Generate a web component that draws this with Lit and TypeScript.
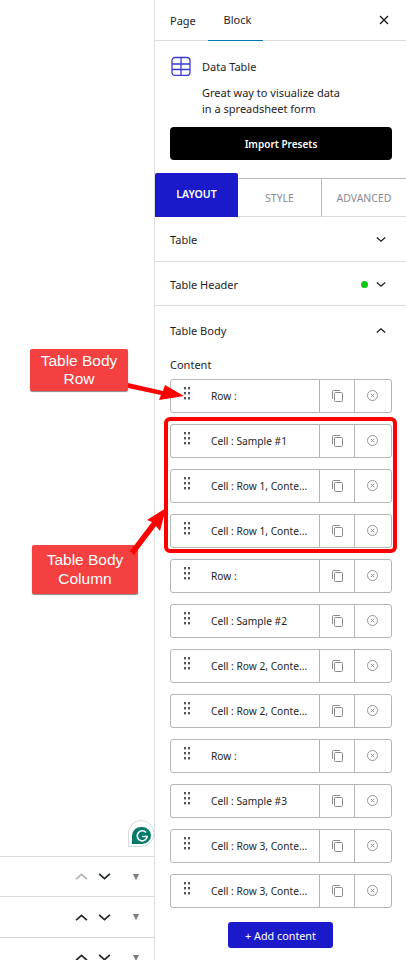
import { LitElement, html, css, svg } from "lit";
import { customElement } from "lit/decorators.js";

const chevron = (up = false) => html`
  <svg class="chev" viewBox="0 0 12 8">
    <path d=${up ? "M1 6.5 6 2l5 4.5" : "M1 1.5 6 6l5-4.5"} fill="none" stroke="currentColor" stroke-width="1.6" />
  </svg>
`;

const rows = [
  "Row :",
  "Cell : Sample #1",
  "Cell : Row 1, Conte...",
  "Cell : Row 1, Conte...",
  "Row :",
  "Cell : Sample #2",
  "Cell : Row 2, Conte...",
  "Cell : Row 2, Conte...",
  "Row :",
  "Cell : Sample #3",
  "Cell : Row 3, Conte...",
  "Cell : Row 3, Conte...",
];

@customElement("app-root")
export class AppRoot extends LitElement {
  static override styles = css`
    :host {
      display: block;
      position: relative;
      width: 406px;
      height: 960px;
      overflow: hidden;
      background: #fff;
      font-family: "Noto Sans", "Open Sans", sans-serif;
      font-size: 11px;
      color: #1e1e1e;
    }

    .page {
      display: flex;
      height: 960px;
    }

    /* left side, editor canvas */
    .canvas {
      width: 154px;
      height: 960px;
      flex: none;
      border-right: 1px solid #ddd;
      overflow: hidden;
      padding-top: 820px;
      box-sizing: content-box;
    }

    .grammarly {
      width: 26px;
      height: 27px;
      margin: 0 0 9px 128px;
      display: block;
    }

    .move-row {
      height: 40px;
      box-sizing: border-box;
      border-top: 1px solid #d8d8dc;
      display: flex;
      align-items: center;
      gap: 10px;
      padding-left: 75px;
      color: #23282d;
    }

    .move-row.tall {
      height: 41px;
    }

    .move-row .off {
      display: flex;
      color: #b4b4b4;
    }

    .move-row .chev {
      width: 13px;
      height: 9px;
    }

    .caret {
      width: 0;
      height: 0;
      margin-left: 12px;
      border: 3.5px solid transparent;
      border-top: 6px solid #7b7b80;
      border-bottom: 0;
    }

    /* right side, inspector */
    .sidebar {
      width: 251px;
      flex: none;
    }

    .top-tabs {
      height: 41px;
      box-sizing: border-box;
      display: flex;
      align-items: center;
      border-bottom: 1px solid #ddd;
      padding: 0 15px;
      position: relative;
    }

    .top-tabs span {
      width: 54px;
    }

    .top-tabs .active {
      position: absolute;
      left: 53px;
      top: 0;
      width: 55px;
      height: 41px;
      padding-left: 4px;
      line-height: 40px;
      text-align: center;
      border-bottom: 1px solid #007cba;
      box-sizing: border-box;
    }

    .close {
      margin-left: auto;
      margin-right: 2px;
    }

    .block-info {
      display: grid;
      grid-template-columns: 31px 1fr;
      padding: 15px 15px 0 16px;
      height: 70px;
      box-sizing: border-box;
      line-height: 16px;
    }

    .block-info svg {
      display: block;
    }

    .block-name {
      padding-top: 3px;
      height: 19px;
    }

    .block-desc {
      grid-column: 2;
      margin-top: 7px;
    }

    .presets {
      display: block;
      width: 222px;
      height: 33px;
      margin: 16px 0 0 15px;
      border: none;
      border-radius: 4px;
      background: #000;
      color: #fff;
      font: 600 10px "Noto Sans", sans-serif;
    }

    .tabs {
      display: grid;
      grid-template-columns: 83px 84px 84px;
      align-items: end;
      height: 44px;
      margin-top: 13px;
    }

    .tabs div {
      height: 39px;
      display: flex;
      align-items: center;
      justify-content: center;
      box-sizing: border-box;
      border-top: 1px solid #bbb;
      border-right: 1px solid #bbb;
      border-bottom: 1px solid #ddd;
      color: #8a8a94;
      font-size: 10.5px;
    }

    .tabs div:last-child {
      border-right: none;
    }

    .tabs .on {
      height: 44px;
      padding-bottom: 2px;
      background: #1a1acb;
      color: #fff;
      font-weight: 600;
      border: none;
      border-radius: 2px 2px 0 0;
    }

    .section {
      display: flex;
      align-items: center;
      justify-content: space-between;
      height: 44px;
      box-sizing: border-box;
      padding: 1px 20px 0 15px;
      border-bottom: 1px solid #ddd;
    }

    .section.first {
      height: 45px;
      padding-top: 0;
    }

    .section .right {
      display: flex;
      align-items: center;
      gap: 8px;
    }

    .section .chev {
      width: 10px;
      height: 7px;
    }

    .dot {
      width: 7px;
      height: 7px;
      border-radius: 50%;
      background: #0fc60f;
    }

    .section.open {
      border-bottom: none;
      height: 48px;
      padding-top: 0;
    }

    .label {
      padding-left: 15px;
      height: 25px;
      line-height: 22px;
    }

    .list {
      display: flex;
      flex-direction: column;
      gap: 11px;
      padding: 0 14px 0 15px;
    }

    .item {
      display: flex;
      align-items: center;
      height: 34px;
      box-sizing: border-box;
      border: 1px solid #b5b5b5;
      border-radius: 3px;
      background: #fff;
    }

    .grip {
      width: 40px;
      flex: none;
      padding-left: 13px;
      box-sizing: border-box;
      display: flex;
      margin-top: -5px;
    }

    .name {
      width: 108px;
      flex: none;
      white-space: nowrap;
      font-size: 10.2px;
    }

    .act {
      width: 35px;
      height: 32px;
      flex: none;
      box-sizing: border-box;
      border-left: 1px solid #b5b5b5;
      display: flex;
      align-items: center;
      justify-content: center;
      color: #8a8a8a;
    }

    .act:last-child {
      flex: 1;
      padding-right: 2px;
    }

    .act svg {
      margin-top: -1px;
    }

    .add {
      display: block;
      width: 105px;
      height: 26px;
      margin: 14px 0 0 73px;
      border: none;
      border-radius: 3px;
      background: #1a1acb;
      color: #fff;
      font: 10.8px "Noto Sans", sans-serif;
    }

    /* annotations over the screenshot */
    .callout {
      position: absolute;
      display: flex;
      align-items: center;
      justify-content: center;
      text-align: center;
      background: #f44040;
      color: #fff;
      border-radius: 2px;
      box-shadow: 0 1px 1px #888;
      font-family: "Liberation Sans", sans-serif;
      font-size: 15.5px;
      line-height: 18.5px;
    }

    .callout.one {
      left: 30px;
      top: 349px;
      width: 98px;
      height: 42px;
    }

    .callout.two {
      left: 32px;
      top: 545px;
      width: 106px;
      height: 49px;
    }

    .frame {
      position: absolute;
      left: 164px;
      top: 417px;
      width: 233px;
      height: 136px;
      box-sizing: border-box;
      border: 4px solid #f00;
      border-radius: 6px;
    }

    .arrows {
      position: absolute;
      left: 0;
      top: 0;
      pointer-events: none;
    }
  `;

  private item(text: string) {
    return html`
      <div class="item">
        <div class="grip">
          <svg width="6" height="13" viewBox="0 0 6 13" fill="#555">
            ${[0, 5, 10].map(
              (y) => svg`<rect x="0" y=${y} width="2" height="2.4" /><rect x="4" y=${y} width="2" height="2.4" />`
            )}
          </svg>
        </div>
        <div class="name">${text}</div>
        <div class="act">
          <svg width="11" height="12" viewBox="0 0 11 12" fill="none" stroke="currentColor">
            <rect x="2.5" y="2.5" width="8" height="9" rx="1" />
            <path d="M.5 9V1.5a1 1 0 0 1 1-1H8" />
          </svg>
        </div>
        <div class="act">
          <svg width="11" height="11" viewBox="0 0 11 11" fill="none" stroke="currentColor" stroke-width=".9">
            <circle cx="5.5" cy="5.5" r="5" />
            <path d="M3.8 3.8l3.4 3.4M7.2 3.8 3.8 7.2" />
          </svg>
        </div>
      </div>
    `;
  }

  override render() {
    return html`
      <div class="page">
        <div class="canvas">
          <svg class="grammarly" viewBox="0 0 26 27">
            <path d="M13 .5a13 13 0 0 1 0 26H.5V13A12.5 12.5 0 0 1 13 .5z" fill="#fff" stroke="#d5d9e2" />
            <path d="M14 7a9 8.500 0 0 1 0 17H4v-8.500A9 8.500 0 0 1 14 7z" fill="#047a6b" />
            <path d="M18 12.500a5 5 0 1 0 1.200 4h-5" fill="none" stroke="#fff" stroke-width="1.600" />
          </svg>
          <div class="move-row"><span class="off">${chevron(true)}</span>${chevron()}<i class="caret"></i></div>
          <div class="move-row tall">${chevron(true)}${chevron()}<i class="caret"></i></div>
          <div class="move-row">${chevron(true)}${chevron()}<i class="caret"></i></div>
        </div>
        <div class="sidebar">
          <div class="top-tabs">
            <span>Page</span>
            <span class="active">Block</span>
            <svg class="close" width="10" height="10" viewBox="0 0 10 10">
              <path d="M1 1l8 8M9 1 1 9" stroke="#1e1e1e" stroke-width="1.400" />
            </svg>
          </div>
          <div class="block-info">
            <svg width="20" height="20" viewBox="0 0 20 20" fill="none" stroke="#3a3ad6" stroke-width="1.300">
              <rect x="1" y="1.500" width="18" height="18" rx="3" />
              <path d="M1 8h18M1 13.500h18M10 1.500v18" />
            </svg>
            <div class="block-name">Data Table</div>
            <div class="block-desc">Great way to visualize data<br />in a spreadsheet form</div>
          </div>
          <button class="presets">Import Presets</button>
          <div class="tabs">
            <div class="on">LAYOUT</div>
            <div>STYLE</div>
            <div>ADVANCED</div>
          </div>
          <div class="section first"><span>Table</span><span class="right">${chevron()}</span></div>
          <div class="section">
            <span>Table Header</span>
            <span class="right"><i class="dot"></i>${chevron()}</span>
          </div>
          <div class="section open"><span>Table Body</span><span class="right">${chevron(true)}</span></div>
          <div class="label">Content</div>
          <div class="list">${rows.map((r) => this.item(r))}</div>
          <button class="add">+ Add content</button>
        </div>
      </div>

      <div class="frame"></div>
      <div class="callout one">Table Body<br />Row</div>
      <div class="callout two">Table Body<br />Column</div>
      <svg class="arrows" width="406" height="960" fill="#f00">
        <path d="M128 383l35 8 2-6 19 11-25 4 2-5-33-7z" />
        <path d="M130 551l22-29-5-2 19-12-6 23-4-5-22 29z" />
      </svg>
    `;
  }
}
